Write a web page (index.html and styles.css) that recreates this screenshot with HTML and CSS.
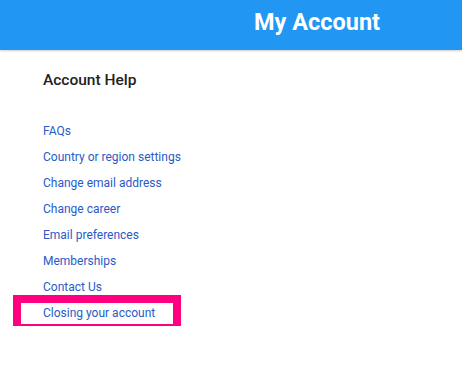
FILE: index.html
```html
<!DOCTYPE html>
<html>
<head>
<meta charset="utf-8">
<link rel="stylesheet" href="styles.css">
</head>
<body>
<header class="topbar">
  <h1 class="title">My Account</h1>
</header>
<main class="content">
  <h2 class="section-title">Account Help</h2>
  <ul class="links">
    <li><a href="#">FAQs</a></li>
    <li><a href="#">Country or region settings</a></li>
    <li><a href="#">Change email address</a></li>
    <li><a href="#">Change career</a></li>
    <li><a href="#">Email preferences</a></li>
    <li><a href="#">Memberships</a></li>
    <li><a href="#">Contact Us</a></li>
    <li class="highlight"><a href="#">Closing your account</a></li>
  </ul>
</main>
</body>
</html>
```

FILE: styles.css
```css
html, body {
  margin: 0;
  padding: 0;
  background: #ffffff;
  font-family: Roboto, "Liberation Sans", Arial, sans-serif;
}

.topbar {
  height: 50px;
  background: #2196f3;
  box-shadow: 0 1px 2px rgba(0, 0, 0, 0.2);
  padding: 7px 0 0 254px;
  box-sizing: border-box;
}

.title {
  margin: 0;
  color: #ffffff;
  font-size: 23.5px;
  font-weight: 700;
  line-height: 30px;
}

.content {
  padding: 20px 0 0 43px;
}

.section-title {
  margin: 0;
  font-size: 15.5px;
  font-weight: 500;
  line-height: 20px;
  color: #222222;
}

.links {
  list-style: none;
  margin: 28px 0 0 0;
  padding: 0;
}

.links li {
  line-height: 26px;
  font-size: 12px;
}

.links a {
  color: #2a5ac8;
  text-decoration: none;
}

.highlight {
  position: relative;
}

.highlight::after {
  content: "";
  position: absolute;
  left: -30px;
  top: -5px;
  width: 168px;
  height: 37px;
  box-sizing: border-box;
  border: 8px solid #ff0080;
  pointer-events: none;
}
```
